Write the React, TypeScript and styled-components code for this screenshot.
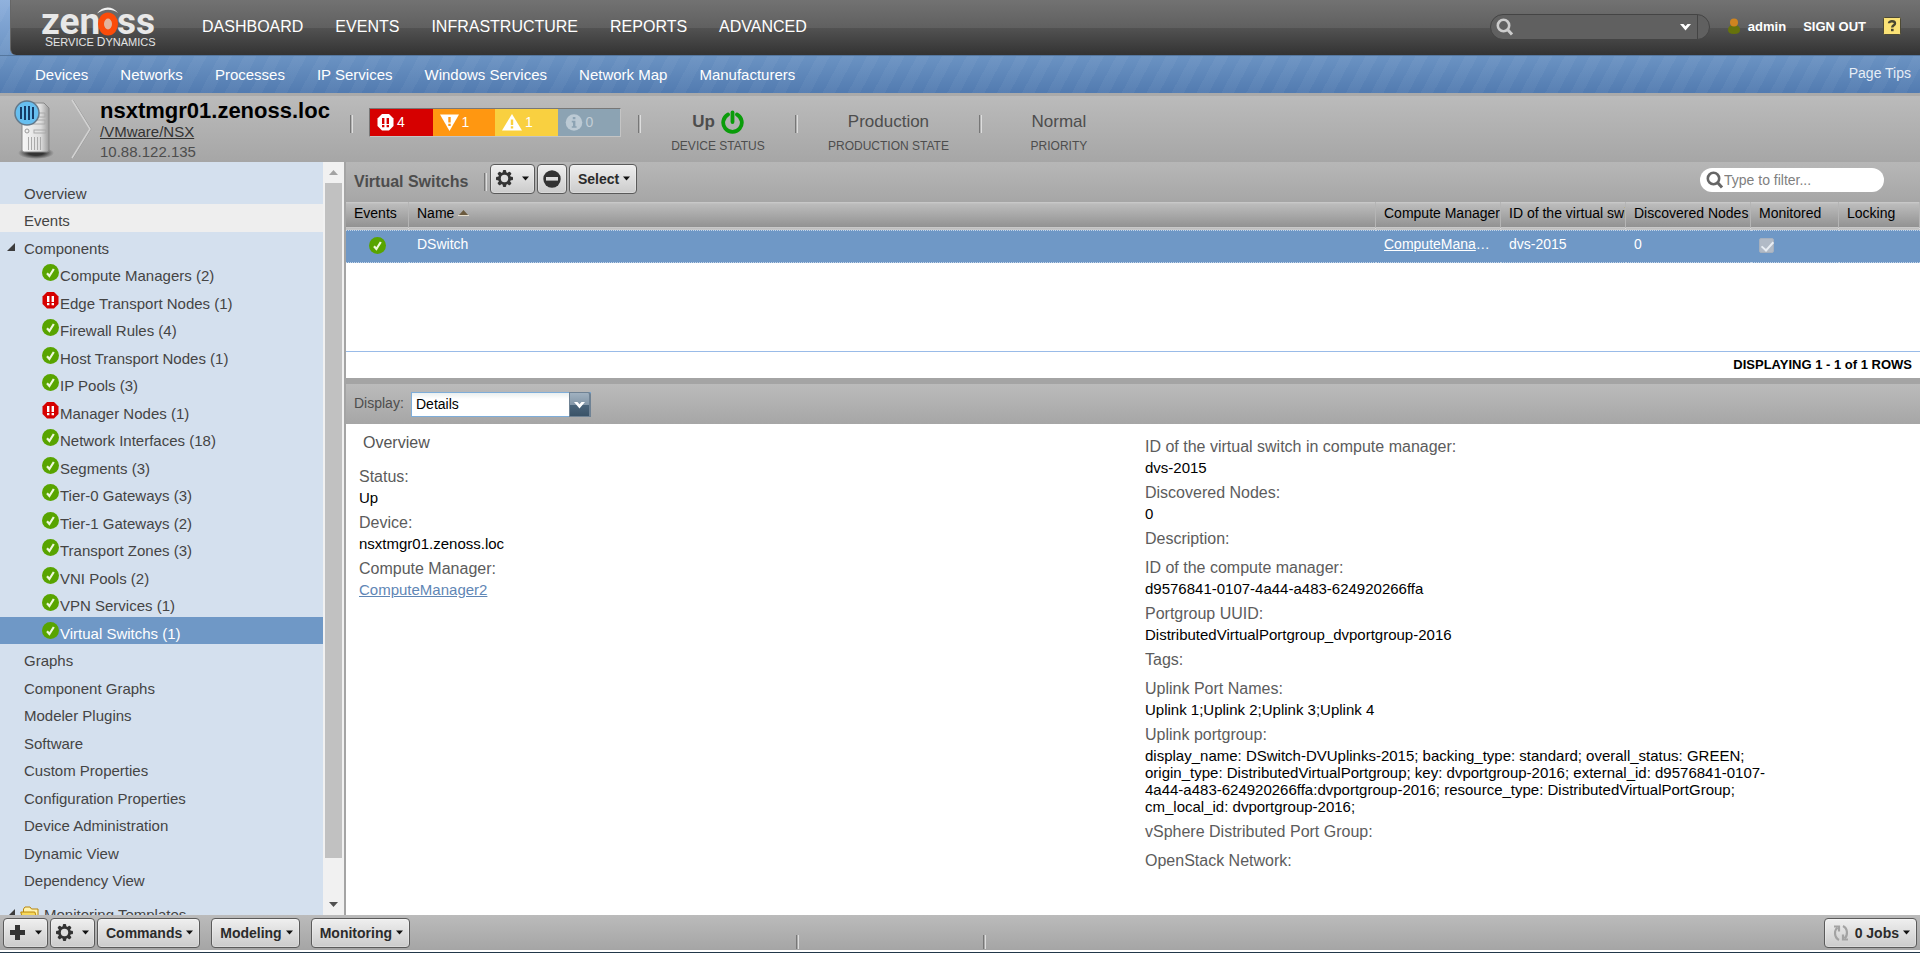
import React from "react";
import styled, { createGlobalStyle, css } from "styled-components";

const GlobalStyle = createGlobalStyle`
  * { box-sizing: border-box; }
  body { margin: 0; background: #fff; }
  body, button, input, select, table {
    font-family: "Liberation Sans", Arial, Helvetica, sans-serif;
  }
  ul { list-style: none; margin: 0; padding: 0; }
`;

/* ---------- page frame ---------- */

const Page = styled.div`
  display: flex;
  flex-direction: column;
  height: 100vh;
  min-width: 1200px;
  overflow: hidden;
  font-size: 14px;
  color: #000;
`;

const Masthead = styled.header`
  flex: none;
  background:
    repeating-linear-gradient(118deg, rgba(255, 255, 255, 0.04) 0 11px, transparent 11px 22px),
    linear-gradient(#8cafdc 0, #6b93c3 60%, #527bb0 100%);
`;

const TopBar = styled.div`
  display: flex;
  align-items: center;
  height: 55px;
  margin-left: 10px;
  padding: 0 19px 0 30px;
  border-left: 1px solid #666;
  border-radius: 0 0 0 6px;
  background: linear-gradient(#727272 0, #606060 50%, #525252 51%, #333 100%);
`;

const Logo = styled.svg`
  flex: none;
  margin-right: 41px;
`;

const MainNav = styled.nav`
  display: flex;
  flex: 1;
  gap: 32px;
  padding-bottom: 2px;
`;

const MainNavLink = styled.a`
  color: #fff;
  font-size: 16px;
  line-height: 20px;
  text-decoration: none;
`;

const SearchBox = styled.div`
  display: flex;
  align-items: center;
  width: 220px;
  height: 26px;
  margin: 0 17px 2px 0;
  padding-left: 5px;
  border: 1px solid #444;
  border-radius: 13px;
  background: #606060;
`;

const SearchInput = styled.input`
  flex: 1;
  min-width: 0;
  height: 24px;
  border: 0;
  outline: 0;
  background: none;
  color: #fff;
  font-size: 14px;
`;

const SearchTrigger = styled.button`
  display: flex;
  align-items: center;
  height: 24px;
  margin-right: 11px;
  padding: 0 6px 0 0;
  border: 0;
  border-right: 1px solid #444;
  background: none;
`;

const UserTools = styled.div`
  display: flex;
  align-items: center;
  padding-bottom: 3px;
  gap: 17px;
  color: #fff;
  font-size: 13px;
  font-weight: bold;
`;

const UserLink = styled.a`
  display: flex;
  align-items: center;
  gap: 7px;
  color: #fff;
  text-decoration: none;
`;

const SubBar = styled.div`
  display: flex;
  justify-content: space-between;
  align-items: center;
  height: 38px;
  padding: 0 9px 0 35px;
  border-top: 1px solid #55779f;
`;

const SubNav = styled.nav`
  display: flex;
  gap: 32px;
`;

const SubNavLink = styled.a`
  color: #fff;
  font-size: 15px;
  line-height: 18px;
  text-decoration: none;
`;

const PageTips = styled.a`
  padding-bottom: 3px;
  color: #e6edf6;
  font-size: 14px;
  text-decoration: none;
`;

/* ---------- device banner ---------- */

const DeviceBanner = styled.section`
  display: flex;
  flex: none;
  height: 69px;
  padding-left: 12px;
  border-top: 3px solid #aaa;
  background: linear-gradient(#bbb, #a6a6a6);
  color: #4d4d4d;
`;

const BannerArt = styled.svg`
  flex: none;
  margin-top: 2px;
`;

const DeviceIdentity = styled.div`
  display: flex;
  flex-direction: column;
  align-items: flex-start;
  width: 250px;
  flex: none;
  padding-top: 3px;
`;

const DeviceName = styled.h1`
  margin: 0;
  color: #000;
  font-size: 22px;
  line-height: 24px;
`;

const DevicePath = styled.a`
  color: #333;
  font-size: 15px;
  line-height: 18px;
`;

const DeviceAddress = styled.span`
  padding-top: 2px;
  font-size: 15px;
  line-height: 18px;
`;

const Rule = styled.span`
  flex: none;
  width: 3px;
  height: 18px;
  border-left: 1px solid #777;
  border-right: 1px solid #ddd;
`;

const BannerRule = styled(Rule)`
  margin-top: 19px;
`;

const EventRainbow = styled.ul`
  display: flex;
  flex: none;
  width: 252px;
  height: 29px;
  margin: 12px 17px 0 16px;
  border: 1px solid;
  border-color: #777 #c4c4c4 #c4c4c4 #777;
`;

const EventCount = styled.li<{ $color: string; $muted?: boolean }>`
  display: flex;
  flex: 1;
  align-items: center;
  gap: 3px;
  padding: 0 0 1px 7px;
  background: ${(p) => p.$color};
  color: ${(p) => (p.$muted ? "#c3ced6" : "#fff")};
  font-size: 14px;
`;

const StateCell = styled.div`
  display: flex;
  flex-direction: column;
  align-items: center;
  min-width: 154px;
  padding: 13px 30px 0;
`;

const StateValue = styled.div<{ $strong?: boolean }>`
  display: flex;
  align-items: center;
  gap: 6px;
  height: 26px;
  font-size: 17px;
  font-weight: ${(p) => (p.$strong ? "bold" : "normal")};
`;

const StateLabel = styled.div`
  font-size: 12px;
  line-height: 22px;
`;

/* ---------- workspace ---------- */

const Workspace = styled.div`
  display: flex;
  flex: 1;
  min-height: 0;
`;

const Sidebar = styled.aside`
  display: flex;
  flex: none;
  width: 346px;
  border-right: 2px solid #a4a4a4;
`;

const Tree = styled.ul`
  flex: 1;
  padding-top: 15px;
  overflow: hidden;
  background: #d4e0ee;
`;

const TreeItem = styled.li<{ $tone?: "hover" | "selected" }>`
  height: 27px;
  color: #444;
  ${(p) => p.$tone === "hover" && css`background: #eee;`}
  ${(p) => p.$tone === "selected" && css`background: #6f98c6; color: #fff;`}
  &:nth-child(even) { height: 28px; }
  &:last-child { padding-top: 6px; }
`;

const TreeLink = styled.a<{ $level: number }>`
  display: flex;
  align-items: center;
  height: 27px;
  gap: ${(p) => (p.$level === 1 ? 1 : 0)}px;
  padding-left: ${(p) => [24, 42, 7][p.$level]}px;
  color: inherit;
  font-size: 15px;
  text-decoration: none;
`;

const TreeText = styled.span`
  padding-top: 6px;
  line-height: 18px;
  white-space: nowrap;
`;

const TwistyBox = styled.span<{ $gap: number }>`
  display: flex;
  padding: 3px ${(p) => p.$gap}px 0 0;
`;

const FolderBox = styled.span`
  display: flex;
  padding: 5px 4px 0 0;
`;

const ScrollTrack = styled.div`
  display: flex;
  flex-direction: column;
  width: 21px;
  padding: 0 2px;
  background: #f1f1f1;
`;

const ScrollArrow = styled.span`
  display: flex;
  flex: none;
  align-items: center;
  justify-content: center;
  height: 21px;
`;

const ScrollRun = styled.div`
  flex: 1;
`;

const ScrollThumb = styled.div`
  height: 95%;
  background: #c1c1c1;
`;

const Main = styled.main`
  display: flex;
  flex: 1;
  flex-direction: column;
  min-width: 0;
`;

const Toolbar = styled.div`
  display: flex;
  flex: none;
  align-items: flex-start;
  height: 40px;
  padding: 2px 36px 0 8px;
  background: linear-gradient(#b7b7b7, #a6a6a6);
`;

const PanelTitle = styled.h2`
  width: 130px;
  margin: 0;
  padding-top: 8px;
  color: #4d4d4d;
  font-size: 16px;
  line-height: 20px;
`;

const ToolbarRule = styled(Rule)`
  margin: 9px 3px 0 0;
`;

const ButtonGroup = styled.div`
  display: flex;
  flex: 1;
  gap: 2px;
`;

const ToolButton = styled.button<{ $icon?: boolean }>`
  display: flex;
  flex: none;
  align-items: center;
  justify-content: center;
  gap: ${(p) => (p.$icon ? 9 : 4)}px;
  height: 30px;
  padding: 0 ${(p) => (p.$icon ? 5 : 6)}px 1px ${(p) => (p.$icon ? 5 : 8)}px;
  border: 1px solid #5a5a5a;
  border-radius: 4px;
  background: linear-gradient(#efefef, #cbcbcb);
  box-shadow: inset 0 0 0 1px rgba(255, 255, 255, 0.25);
  color: #2b2b2b;
  font-size: 14px;
  font-weight: bold;
  white-space: nowrap;
`;

const FilterBox = styled.label`
  display: flex;
  align-items: center;
  width: 184px;
  height: 24px;
  margin-top: 4px;
  padding-left: 6px;
  border-radius: 12px;
  background: #fff;
`;

const FilterInput = styled.input`
  width: 150px;
  padding: 0;
  border: 0;
  outline: 0;
  background: none;
  color: #333;
  font-size: 14px;
  &::placeholder { color: #808080; }
`;

const GridBody = styled.div`
  height: 149px;
  flex: none;
`;

const Grid = styled.table`
  width: 100%;
  border-collapse: separate;
  border-spacing: 0;
  table-layout: fixed;
  font-size: 14px;
`;

const HeadCell = styled.th`
  height: 28px;
  padding: 0 0 4px 8px;
  overflow: hidden;
  border-right: 1px solid #b5b5b5;
  border-bottom: 3px double #c8c8c8;
  background: linear-gradient(#ccc 0, #bcbcbc 2px, #929292 100%);
  font-weight: normal;
  text-align: left;
  white-space: nowrap;
`;

const SortMark = styled.svg`
  margin: 0 0 2px 4px;
`;

const Cell = styled.td<{ $center?: boolean }>`
  height: 33px;
  padding: 0 8px 5px;
  overflow: hidden;
  border: dotted #c5d6ea;
  border-width: 1px 0;
  background: #6f98c6;
  color: #fff;
  text-align: ${(p) => (p.$center ? "center" : "left")};
  text-overflow: ellipsis;
  white-space: nowrap;
  svg { display: inline-block; margin-top: 3px; vertical-align: middle; }
`;

const CellLink = styled.a`
  color: #fff;
`;

const Tick = styled.input`
  position: relative;
  width: 15px;
  height: 15px;
  margin: 2px 0 0;
  appearance: none;
  vertical-align: middle;
  border: 1px solid #a5b0be;
  border-radius: 2px;
  background: #b1bac6;
  &:checked::after {
    content: "";
    position: absolute;
    top: 0;
    left: 4px;
    width: 5px;
    height: 10px;
    border: solid #e9eef4;
    border-width: 0 2px 2px 0;
    rotate: 42deg;
  }
`;

const GridFooter = styled.div`
  flex: none;
  height: 27px;
  padding-right: 8px;
  border-top: 1px solid #99bbe8;
  font-size: 13px;
  font-weight: bold;
  line-height: 25px;
  text-align: right;
`;

const DisplayBar = styled.div`
  display: flex;
  flex: none;
  height: 46px;
  padding: 8px 8px 0;
  border-top: 6px solid #a4a4a4;
  background: linear-gradient(#bbb, #a6a6a6);
`;

const DisplayLabel = styled.label`
  width: 57px;
  color: #4d4d4d;
  font-size: 14px;
  line-height: 22px;
`;

const Combo = styled.div`
  position: relative;
  width: 180px;
  height: 25px;
`;

const ComboSelect = styled.select`
  width: 100%;
  height: 25px;
  padding: 0 24px 2px 4px;
  appearance: none;
  border: 1px solid #7eadd9;
  border-radius: 0;
  background: linear-gradient(#e9eeee 0, #fff 6px);
  color: #000;
  font-size: 14px;
`;

const ComboArrow = styled.span`
  position: absolute;
  top: 0;
  right: 0;
  display: flex;
  align-items: center;
  justify-content: center;
  width: 22px;
  height: 25px;
  pointer-events: none;
  border: solid #6f8294;
  border-width: 1px 2px 1px 1px;
  border-radius: 0 3px 0 0;
  background: linear-gradient(#a0b1c0 0, #8497a8 50%, #4b657b 51%, #3a5368 100%);
`;

const Details = styled.section`
  display: grid;
  grid-template-columns: 1fr 1fr;
  flex: 1;
  min-height: 0;
  overflow: hidden;
`;

const DetailColumn = styled.div<{ $titled?: boolean }>`
  padding: ${(p) => (p.$titled ? 10 : 13)}px 0 0 ${(p) => (p.$titled ? 13 : 12)}px;
`;

const DetailHeading = styled.h3`
  margin: 0;
  padding: 0 0 15px 4px;
  color: #555;
  font-size: 16px;
  font-weight: normal;
  line-height: 18px;
`;

const FieldList = styled.dl`
  width: 82%;
  margin: 0;
`;

const Field = styled.div`
  padding: 1px 0 7px;
`;

const FieldLabel = styled.dt`
  padding-bottom: 3px;
  color: #5c5c5c;
  font-size: 16px;
  line-height: 18px;
`;

const FieldValue = styled.dd`
  margin: 0;
  font-size: 15px;
  line-height: 17px;
`;

const FieldLink = styled.a`
  color: #5f86b5;
`;

/* ---------- footer ---------- */

const FooterBar = styled.footer`
  display: flex;
  flex: none;
  justify-content: space-between;
  height: 35px;
  padding: 3px 3px 0;
  background: linear-gradient(#bbb, #a5a5a5);
`;

const FooterSide = styled.div<{ $gap: number }>`
  display: flex;
  gap: ${(p) => p.$gap}px;
`;

const FooterMarks = styled.div`
  display: flex;
  flex: 1;
  align-items: flex-end;
  gap: 184px;
  padding-left: 386px;
`;

const FooterMark = styled(Rule)`
  height: 14px;
  margin-bottom: 1px;
`;

const WindowEdge = styled.div`
  flex: none;
  height: 3px;
  border-top: 2px solid #fff;
  background: #22384a;
`;

/* ---------- icons ---------- */

const Caret = () => (
  <svg width="7" height="5" viewBox="0 0 7 5"><path d="M0 .5h7L3.5 4.5z" fill="#111" /></svg>
);

const OkIcon = () => (
  <svg width="17" height="17" viewBox="0 0 17 17">
    <circle cx="8.500" cy="8.500" r="8.500" fill="#58a400" />
    <path d="M5 9.200l2.400 2.800L11.800 5" fill="none" stroke="#eef8dc" strokeWidth="2.200" />
  </svg>
);

const CriticalShape = ({ fill, mark }: { fill: string; mark: string }) => (
  <svg width="17" height="17" viewBox="0 0 17 17">
    <path d="M5 0h7l4.500 4.500v7.500l-4.500 4.500H5L.5 12V4.500z" fill={fill} />
    <path d="M5 4h2.400v6H5zM9.600 4H12v6H9.600zM5 11h2.400v2.200H5zM9.600 11H12v2.200H9.600z" fill={mark} />
  </svg>
);

const ErrorIcon = () => (
  <svg width="19" height="17" viewBox="0 0 19 17">
    <path d="M0 .5h19L9.500 17z" fill="#fff" />
    <path d="M8.300 3h2.400v5.500H8.300zM8.300 9.800h2.400V12H8.300z" fill="#ff9711" />
  </svg>
);

const WarningIcon = () => (
  <svg width="20" height="17" viewBox="0 0 20 17">
    <path d="M0 16.500h20L10 0z" fill="#fff" />
    <path d="M8.800 5.500h2.400V11H8.800zM8.800 12.200h2.400v2.200H8.800z" fill="#f9d040" />
  </svg>
);

const InfoIcon = () => (
  <svg width="18" height="17" viewBox="0 0 18 17">
    <circle cx="9" cy="8.500" r="8.300" fill="#bccad4" />
    <path d="M7.800 3h2.600v2.200H7.800zM6.800 6.800h3.600v5.400h1.200v1.600H6.800v-1.600h1.200V8.400H6.800z" fill="#8ca3b3" />
  </svg>
);

const GearIcon = () => (
  <svg width="17" height="17" viewBox="0 0 17 17">
    <g fill="#333">
      {[0, 45, 90, 135].map((a) => (
        <rect key={a} x="6.800" y="0" width="3.400" height="17" rx="1" transform={`rotate(${a} 8.500 8.500)`} />
      ))}
      <circle cx="8.500" cy="8.500" r="6.500" />
    </g>
    <circle cx="8.500" cy="8.500" r="3.700" fill="#dedede" />
  </svg>
);

const MinusIcon = () => (
  <svg width="18" height="18" viewBox="0 0 18 18">
    <circle cx="9" cy="9" r="8.700" fill="#333" />
    <rect x="3" y="7" width="12" height="3.600" fill="#ddd" />
  </svg>
);

const PlusIcon = () => (
  <svg width="17" height="17" viewBox="0 0 17 17">
    <path d="M6 1h5v5h5v5h-5v5H6v-5H1V6h5z" fill="#333" />
  </svg>
);

const Magnifier = ({ color }: { color: string }) => (
  <svg width="18" height="18" viewBox="0 0 18 18" fill="none" stroke={color}>
    <circle cx="7.500" cy="7.500" r="5.700" strokeWidth="2.600" />
    <path d="M11.500 11.500l4.500 5" strokeWidth="3" />
  </svg>
);

const DownMark = () => (
  <svg width="11" height="8" viewBox="0 0 11 8">
    <path d="M0 1h3.500l2 2.200 2-2.200H11L5.500 7.500z" fill="#fff" />
  </svg>
);

const PersonIcon = () => (
  <svg width="14" height="16" viewBox="0 0 14 16">
    <path d="M1 12c0-4 3-5 6-5s6 1 6 5c0 2.500-2 4-6 4s-6-1.500-6-4z" fill="#66720c" />
    <circle cx="7" cy="4.500" r="4" fill="#cf8420" />
  </svg>
);

const HelpIcon = () => (
  <svg width="18" height="18" viewBox="0 0 18 18">
    <rect x=".5" y=".5" width="17" height="17" rx="1" fill="#fbe276" stroke="#4e4a35" />
    <path d="M6 6.200C6 3.600 12 3.600 12 6.400c0 1.900-2.800 1.900-2.800 4.200" fill="none" stroke="#4a4631" strokeWidth="2.400" />
    <rect x="8" y="11.800" width="2.600" height="2.400" fill="#4a4631" />
  </svg>
);

const PowerIcon = () => (
  <svg width="23" height="25" viewBox="0 0 23 25" fill="none" stroke="#0a9c0a" strokeLinecap="round">
    <path d="M7 4.500a9.300 9.300 0 1 0 9 0" strokeWidth="3.800" />
    <path d="M11.500 2.500v9.500" strokeWidth="3.800" />
  </svg>
);

const Twisty = () => (
  <svg width="8" height="8" viewBox="0 0 8 8"><path d="M8 0v8H0z" fill="#3c3c3c" /></svg>
);

const FolderIcon = () => (
  <svg width="20" height="16" viewBox="0 0 20 16">
    <path d="M3.500 13V3l1.500-2h5l1.500 2H18v10z" fill="#fff3ae" stroke="#b8860b" />
    <path d="M.8 6h14l3 9H3z" fill="#f7d95c" stroke="#b8860b" />
  </svg>
);

const RefreshIcon = () => (
  <svg width="18" height="18" viewBox="0 0 18 18" fill="none" stroke="#a3a3a3" strokeWidth="2.200">
    <path d="M6 16C1 13.500 1 6.500 4.500 3.500M10 2c5 2.500 5 9.500 1.500 12.500" />
    <path d="M1 2.500h5v5M15 15.500h-5v-5" />
  </svg>
);

const ZenossLogo = () => (
  <Logo width="120" height="48" viewBox="0 0 120 48" role="img" aria-label="Zenoss Service Dynamics">
    <g fill="#e8e8e8" fontFamily="Roboto, sans-serif" fontWeight="700" fontSize="37">
      <text x="0" y="30">zen</text>
      <text x="76" y="30">ss</text>
    </g>
    <ellipse cx="67" cy="20" rx="7" ry="8.500" fill="#e2b49c" stroke="#fb4c0a" strokeWidth="6" />
    <path d="M56 9.500C61 2 71 1 77 9 71 4.500 63 4.500 56 9.500z" fill="#f2f2f2" />
    <text x="4" y="42" fill="#e4e4e4" fontFamily="Liberation Sans, sans-serif" fontSize="11">
      <tspan fontSize="12">S</tspan>ERVICE <tspan fontSize="12">D</tspan>YNAMICS
    </text>
  </Logo>
);

const DeviceArt = () => (
  <BannerArt width="88" height="62" viewBox="0 0 88 62">
    <defs>
      <linearGradient id="tower" x1="0" x2="1">
        <stop offset="0" stopColor="#f8f8f8" />
        <stop offset=".7" stopColor="#dcdcdc" />
        <stop offset="1" stopColor="#9a9a9a" />
      </linearGradient>
      <radialGradient id="ground">
        <stop offset=".4" stopColor="#333" />
        <stop offset="1" stopColor="#333" stopOpacity="0" />
      </radialGradient>
    </defs>
    <ellipse cx="24" cy="55" rx="18" ry="6" fill="url(#ground)" />
    <path d="M10 9q0-4 4-4h18l5 5v42q0 2-2 2H12q-2 0-2-2z" fill="url(#tower)" stroke="#888" />
    <g fill="none" stroke="#aaa">
      <rect x="13" y="15" width="20" height="4" />
      <rect x="13" y="22" width="20" height="4" />
      <rect x="22" y="32" width="12" height="3" />
      <path d="M16.500 39v13M19.500 39v13M22.500 39v13M25.500 39v13M28.500 39v13" />
    </g>
    <circle cx="15" cy="33" r="2" fill="none" stroke="#999" />
    <circle cx="15" cy="15" r="12" fill="#67bff0" stroke="#62788a" strokeWidth="1.500" />
    <path d="M9 9v12M13 8v14M17 8v14M21 9v12" stroke="#153a66" strokeWidth="2" />
    <path d="M61 2l18 29-18 29" fill="none" stroke="#999" />
    <path d="M60 2l18 29-18 29" fill="none" stroke="#d2d2d2" strokeWidth="1.500" />
  </BannerArt>
);

/* ---------- data ---------- */

const mainLinks = ["DASHBOARD", "EVENTS", "INFRASTRUCTURE", "REPORTS", "ADVANCED"];
const subLinks = ["Devices", "Networks", "Processes", "IP Services", "Windows Services", "Network Map", "Manufacturers"];

const components: [string, boolean][] = [
  ["Compute Managers (2)", true],
  ["Edge Transport Nodes (1)", false],
  ["Firewall Rules (4)", true],
  ["Host Transport Nodes (1)", true],
  ["IP Pools (3)", true],
  ["Manager Nodes (1)", false],
  ["Network Interfaces (18)", true],
  ["Segments (3)", true],
  ["Tier-0 Gateways (3)", true],
  ["Tier-1 Gateways (2)", true],
  ["Transport Zones (3)", true],
  ["VNI Pools (2)", true],
  ["VPN Services (1)", true],
  ["Virtual Switchs (1)", true],
];

const views = [
  "Graphs",
  "Component Graphs",
  "Modeler Plugins",
  "Software",
  "Custom Properties",
  "Configuration Properties",
  "Device Administration",
  "Dynamic View",
  "Dependency View",
];

const leftFields: [string, React.ReactNode][] = [
  ["Status:", "Up"],
  ["Device:", "nsxtmgr01.zenoss.loc"],
  ["Compute Manager:", <FieldLink href="#manager">ComputeManager2</FieldLink>],
];

const rightFields: [string, React.ReactNode][] = [
  ["ID of the virtual switch in compute manager:", "dvs-2015"],
  ["Discovered Nodes:", "0"],
  ["Description:", null],
  ["ID of the compute manager:", "d9576841-0107-4a44-a483-624920266ffa"],
  ["Portgroup UUID:", "DistributedVirtualPortgroup_dvportgroup-2016"],
  ["Tags:", null],
  ["Uplink Port Names:", "Uplink 1;Uplink 2;Uplink 3;Uplink 4"],
  [
    "Uplink portgroup:",
    "display_name: DSwitch-DVUplinks-2015; backing_type: standard; overall_status: GREEN; origin_type: DistributedVirtualPortgroup; key: dvportgroup-2016; external_id: d9576841-0107-4a44-a483-624920266ffa:dvportgroup-2016; resource_type: DistributedVirtualPortGroup; cm_local_id: dvportgroup-2016;",
  ],
  ["vSphere Distributed Port Group:", null],
  ["OpenStack Network:", null],
];

/* ---------- composed parts ---------- */

const Fields = ({ items }: { items: [string, React.ReactNode][] }) => (
  <FieldList>
    {items.map(([label, value]) => (
      <Field key={label}>
        <FieldLabel>{label}</FieldLabel>
        {value !== null && <FieldValue>{value}</FieldValue>}
      </Field>
    ))}
  </FieldList>
);

const MenuButton = ({ children }: { children: React.ReactNode }) => (
  <ToolButton type="button">{children}<Caret /></ToolButton>
);

const IconMenuButton = ({ label, children }: { label: string; children: React.ReactNode }) => (
  <ToolButton type="button" $icon aria-label={label}>{children}<Caret /></ToolButton>
);

const Navigation = () => (
  <Sidebar>
    <Tree>
      <TreeItem><TreeLink $level={0} href="#overview"><TreeText>Overview</TreeText></TreeLink></TreeItem>
      <TreeItem $tone="hover"><TreeLink $level={0} href="#events"><TreeText>Events</TreeText></TreeLink></TreeItem>
      <TreeItem>
        <TreeLink $level={2} href="#components">
          <TwistyBox $gap={9}><Twisty /></TwistyBox>
          <TreeText>Components</TreeText>
        </TreeLink>
      </TreeItem>
      {components.map(([name, ok]) => (
        <TreeItem key={name} $tone={name.startsWith("Virtual") ? "selected" : undefined}>
          <TreeLink $level={1} href="#component">
            {ok ? <OkIcon /> : <CriticalShape fill="#d60000" mark="#fff" />}
            <TreeText>{name}</TreeText>
          </TreeLink>
        </TreeItem>
      ))}
      {views.map((name) => (
        <TreeItem key={name}><TreeLink $level={0} href="#view"><TreeText>{name}</TreeText></TreeLink></TreeItem>
      ))}
      <TreeItem>
        <TreeLink $level={2} href="#templates">
          <TwistyBox $gap={5}><Twisty /></TwistyBox>
          <FolderBox><FolderIcon /></FolderBox>
          <TreeText>Monitoring Templates</TreeText>
        </TreeLink>
      </TreeItem>
    </Tree>
    <ScrollTrack aria-hidden="true">
      <ScrollArrow><svg width="9" height="5" viewBox="0 0 9 5"><path d="M0 5h9L4.500 0z" fill="#a3a3a3" /></svg></ScrollArrow>
      <ScrollRun><ScrollThumb /></ScrollRun>
      <ScrollArrow><svg width="9" height="5" viewBox="0 0 9 5"><path d="M0 0h9L4.500 5z" fill="#505050" /></svg></ScrollArrow>
    </ScrollTrack>
  </Sidebar>
);

const SwitchGrid = () => (
  <GridBody>
    <Grid>
      <colgroup>
        <col width="63" /><col /><col width="125" /><col width="125" /><col width="125" /><col width="88" /><col width="81" />
      </colgroup>
      <thead>
        <tr>
          <HeadCell>Events</HeadCell>
          <HeadCell>
            Name
            <SortMark width="11" height="6" viewBox="0 0 11 6">
              <path d="M0 5h11v1H0z" fill="#e4dccb" /><path d="M1 5h9L5.500 0z" fill="#6b5a3e" />
            </SortMark>
          </HeadCell>
          <HeadCell>Compute Manager</HeadCell>
          <HeadCell>ID of the virtual switch in compute manager</HeadCell>
          <HeadCell>Discovered Nodes</HeadCell>
          <HeadCell>Monitored</HeadCell>
          <HeadCell>Locking</HeadCell>
        </tr>
      </thead>
      <tbody>
        <tr>
          <Cell $center><OkIcon /></Cell>
          <Cell>DSwitch</Cell>
          <Cell><CellLink href="#manager">ComputeManager2</CellLink></Cell>
          <Cell>dvs-2015</Cell>
          <Cell>0</Cell>
          <Cell><Tick type="checkbox" checked disabled readOnly aria-label="Monitored" /></Cell>
          <Cell />
        </tr>
      </tbody>
    </Grid>
  </GridBody>
);

export default function App() {
  return (
    <Page>
      <GlobalStyle />
      <Masthead>
        <TopBar>
          <ZenossLogo />
          <MainNav>{mainLinks.map((l) => <MainNavLink key={l} href="#main">{l}</MainNavLink>)}</MainNav>
          <SearchBox>
            <Magnifier color="#ccc" />
            <SearchInput type="text" aria-label="Search" />
            <SearchTrigger type="button" aria-label="Search options"><DownMark /></SearchTrigger>
          </SearchBox>
          <UserTools>
            <UserLink href="#user"><PersonIcon />admin</UserLink>
            <UserLink href="#signout">SIGN OUT</UserLink>
            <UserLink href="#help" aria-label="Help"><HelpIcon /></UserLink>
          </UserTools>
        </TopBar>
        <SubBar>
          <SubNav>{subLinks.map((l) => <SubNavLink key={l} href="#sub">{l}</SubNavLink>)}</SubNav>
          <PageTips href="#tips">Page Tips</PageTips>
        </SubBar>
      </Masthead>

      <DeviceBanner>
        <DeviceArt />
        <DeviceIdentity>
          <DeviceName>nsxtmgr01.zenoss.loc</DeviceName>
          <DevicePath href="#path">/VMware/NSX</DevicePath>
          <DeviceAddress>10.88.122.135</DeviceAddress>
        </DeviceIdentity>
        <BannerRule />
        <EventRainbow>
          <EventCount $color="#d60000"><CriticalShape fill="#fff" mark="#d60000" />4</EventCount>
          <EventCount $color="#ff9711"><ErrorIcon />1</EventCount>
          <EventCount $color="#f9d040"><WarningIcon />1</EventCount>
          <EventCount $color="#8ca3b3" $muted><InfoIcon />0</EventCount>
        </EventRainbow>
        <BannerRule />
        <StateCell>
          <StateValue $strong>Up <PowerIcon /></StateValue>
          <StateLabel>DEVICE STATUS</StateLabel>
        </StateCell>
        <BannerRule />
        <StateCell>
          <StateValue>Production</StateValue>
          <StateLabel>PRODUCTION STATE</StateLabel>
        </StateCell>
        <BannerRule />
        <StateCell>
          <StateValue>Normal</StateValue>
          <StateLabel>PRIORITY</StateLabel>
        </StateCell>
      </DeviceBanner>

      <Workspace>
        <Navigation />
        <Main>
          <Toolbar>
            <PanelTitle>Virtual Switchs</PanelTitle>
            <ToolbarRule />
            <ButtonGroup>
              <IconMenuButton label="Configure"><GearIcon /></IconMenuButton>
              <ToolButton type="button" $icon aria-label="Remove"><MinusIcon /></ToolButton>
              <MenuButton>Select</MenuButton>
            </ButtonGroup>
            <FilterBox>
              <Magnifier color="#666" />
              <FilterInput type="text" placeholder="Type to filter..." aria-label="Filter" />
            </FilterBox>
          </Toolbar>
          <SwitchGrid />
          <GridFooter>DISPLAYING 1 - 1 of 1 ROWS</GridFooter>
          <DisplayBar>
            <DisplayLabel htmlFor="display">Display:</DisplayLabel>
            <Combo>
              <ComboSelect id="display" defaultValue="Details"><option>Details</option></ComboSelect>
              <ComboArrow><DownMark /></ComboArrow>
            </Combo>
          </DisplayBar>
          <Details>
            <DetailColumn $titled>
              <DetailHeading>Overview</DetailHeading>
              <Fields items={leftFields} />
            </DetailColumn>
            <DetailColumn>
              <Fields items={rightFields} />
            </DetailColumn>
          </Details>
        </Main>
      </Workspace>

      <FooterBar>
        <FooterSide $gap={11}>
          <FooterSide $gap={2}>
            <IconMenuButton label="Add"><PlusIcon /></IconMenuButton>
            <IconMenuButton label="Settings"><GearIcon /></IconMenuButton>
            <MenuButton>Commands</MenuButton>
          </FooterSide>
          <MenuButton>Modeling</MenuButton>
          <MenuButton>Monitoring</MenuButton>
        </FooterSide>
        <FooterMarks><FooterMark /><FooterMark /></FooterMarks>
        <FooterSide $gap={0}>
          <ToolButton type="button"><RefreshIcon />0 Jobs<Caret /></ToolButton>
        </FooterSide>
      </FooterBar>
      <WindowEdge />
    </Page>
  );
}
